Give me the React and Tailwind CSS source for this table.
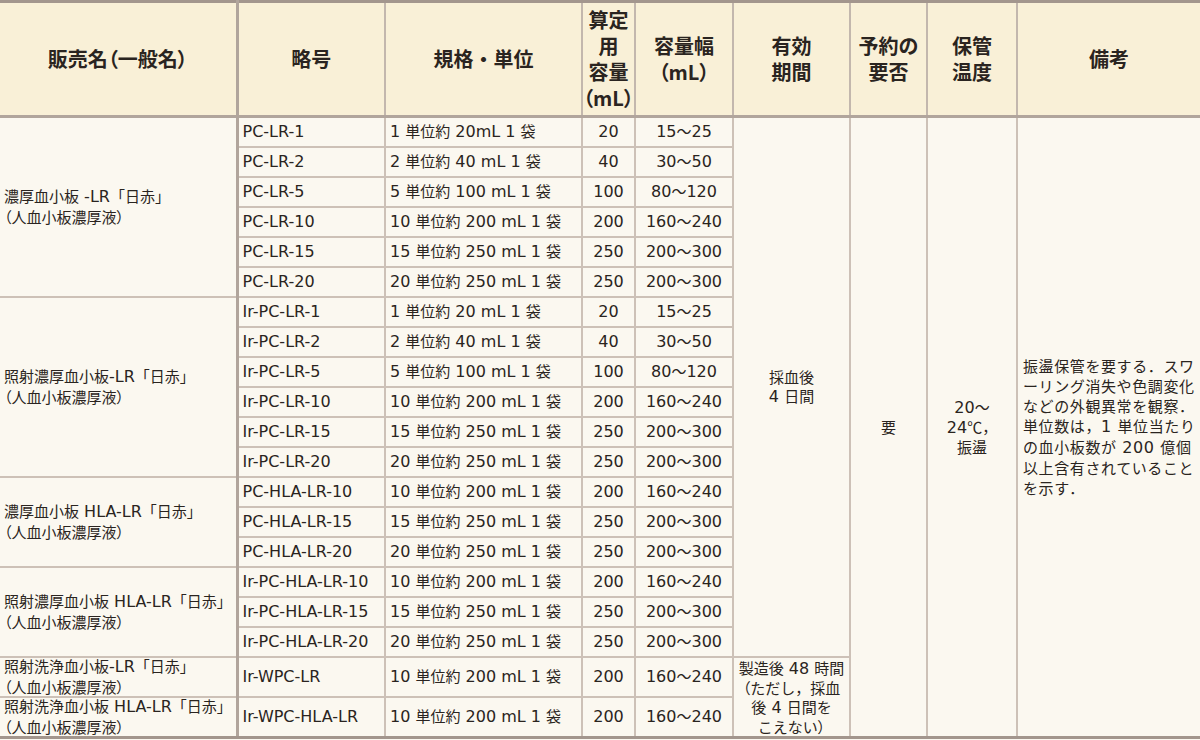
import React from "react";

// ASCII runs use DejaVu Sans at 16px, Japanese runs stay in Noto Sans CJK at 15px
const Mixed = ({ text }) =>
  text.split(/([\x20-\x7e]+)/).map((s, i) =>
    s === "" ? null : /^[\x20-\x7e]+$/.test(s) ? (
      <span key={i} className="font-['DejaVu_Sans',sans-serif] text-[16px]">
        {s}
      </span>
    ) : (
      <span key={i}>{s}</span>
    )
  );

const Lines = ({ lines }) =>
  lines.map((l, i) => (
    <React.Fragment key={i}>
      {i > 0 && <br />}
      <Mixed text={l} />
    </React.Fragment>
  ));

const groups = [
  {
    name: "濃厚血小板 -LR「日赤」",
    rows: [
      ["PC-LR-1", "1 単位約 20mL 1 袋", "20", "15～25"],
      ["PC-LR-2", "2 単位約 40 mL 1 袋", "40", "30～50"],
      ["PC-LR-5", "5 単位約 100 mL 1 袋", "100", "80～120"],
      ["PC-LR-10", "10 単位約 200 mL 1 袋", "200", "160～240"],
      ["PC-LR-15", "15 単位約 250 mL 1 袋", "250", "200～300"],
      ["PC-LR-20", "20 単位約 250 mL 1 袋", "250", "200～300"],
    ],
  },
  {
    name: "照射濃厚血小板-LR「日赤」",
    rows: [
      ["Ir-PC-LR-1", "1 単位約 20 mL 1 袋", "20", "15～25"],
      ["Ir-PC-LR-2", "2 単位約 40 mL 1 袋", "40", "30～50"],
      ["Ir-PC-LR-5", "5 単位約 100 mL 1 袋", "100", "80～120"],
      ["Ir-PC-LR-10", "10 単位約 200 mL 1 袋", "200", "160～240"],
      ["Ir-PC-LR-15", "15 単位約 250 mL 1 袋", "250", "200～300"],
      ["Ir-PC-LR-20", "20 単位約 250 mL 1 袋", "250", "200～300"],
    ],
  },
  {
    name: "濃厚血小板 HLA-LR「日赤」",
    rows: [
      ["PC-HLA-LR-10", "10 単位約 200 mL 1 袋", "200", "160～240"],
      ["PC-HLA-LR-15", "15 単位約 250 mL 1 袋", "250", "200～300"],
      ["PC-HLA-LR-20", "20 単位約 250 mL 1 袋", "250", "200～300"],
    ],
  },
  {
    name: "照射濃厚血小板 HLA-LR「日赤」",
    rows: [
      ["Ir-PC-HLA-LR-10", "10 単位約 200 mL 1 袋", "200", "160～240"],
      ["Ir-PC-HLA-LR-15", "15 単位約 250 mL 1 袋", "250", "200～300"],
      ["Ir-PC-HLA-LR-20", "20 単位約 250 mL 1 袋", "250", "200～300"],
    ],
  },
  {
    name: "照射洗浄血小板-LR「日赤」",
    tall: true,
    rows: [["Ir-WPC-LR", "10 単位約 200 mL 1 袋", "200", "160～240"]],
  },
  {
    name: "照射洗浄血小板 HLA-LR「日赤」",
    tall: true,
    last: true,
    rows: [["Ir-WPC-HLA-LR", "10 単位約 200 mL 1 袋", "200", "160～240"]],
  },
];

const th =
  "bg-[#f9f0d7] border-2 border-[#c3b7ad] border-t-[3px] border-t-[#a3968d] border-b-[3px] border-b-[#b1a59c] font-bold text-[20px] leading-[26px] text-center align-middle px-0";
const td = "bg-[#fbf8f0] border-2 border-[#cdc1b7] px-[3px] py-0 align-middle whitespace-nowrap";
const palt = "[font-feature-settings:'palt']";

export default function App() {
  let rowIndex = 0;
  return (
    <div className="w-[1200px] h-[740px] overflow-hidden bg-[#fbf8f0]">
      <table className="w-[1200px] table-fixed border-collapse text-[15px] text-[#2a2420] font-['Noto_Sans_CJK_JP',sans-serif]">
        <colgroup>
          <col className="w-[237px]" />
          <col className="w-[148px]" />
          <col className="w-[197px]" />
          <col className="w-[53px]" />
          <col className="w-[98px]" />
          <col className="w-[117px]" />
          <col className="w-[77px]" />
          <col className="w-[90px]" />
          <col className="w-[183px]" />
        </colgroup>
        <thead>
          <tr className="h-[115px]">
            <th className={th + " border-l-0 border-r-[3px] border-r-[#b1a59c]"}>
              <span className={palt}>販売名（一般名）</span>
            </th>
            <th className={th}>略号</th>
            <th className={th}>規格・単位</th>
            <th className={th}>
              <div className="flex flex-col items-center leading-[26px]">
                <span>算定</span>
                <span>用</span>
                <span>容量</span>
                <span className={palt}>（mL）</span>
              </div>
            </th>
            <th className={th}>
              容量幅
              <br />
              <span className={palt}>（mL）</span>
            </th>
            <th className={th}>
              有効
              <br />
              期間
            </th>
            <th className={th}>
              予約の
              <br />
              要否
            </th>
            <th className={th}>
              保管
              <br />
              温度
            </th>
            <th className={th + " border-r-0"}>備考</th>
          </tr>
        </thead>
        <tbody>
          {groups.map((g) =>
            g.rows.map((r, i) => {
              const first = rowIndex === 0;
              const idx = rowIndex++;
              const bottom = g.last ? " border-b-[3px] border-b-[#a3968d]" : "";
              return (
                <tr key={r[0]} className={g.tall ? "h-[40px]" : "h-[30px]"}>
                  {i === 0 && (
                    <td
                      rowSpan={g.rows.length}
                      className={
                        td +
                        " bg-[#faf2dc] border-l-0 border-r-[3px] border-r-[#b1a59c] px-[4px] leading-[20px]" +
                        bottom
                      }
                    >
                      <div className={g.tall ? "h-[36px] flex flex-col justify-center" : ""}>
                        <div>
                          <Mixed text={g.name} />
                          <br />
                          <span className={palt}>（人血小板濃厚液）</span>
                        </div>
                      </div>
                    </td>
                  )}
                  <td className={td + " px-[4px]" + bottom}>
                    <Mixed text={r[0]} />
                  </td>
                  <td className={td + " px-[4px]" + bottom}>
                    <Mixed text={r[1]} />
                  </td>
                  <td className={td + " text-center" + bottom}>
                    <Mixed text={r[2]} />
                  </td>
                  <td className={td + " text-center" + bottom}>
                    <Mixed text={r[3]} />
                  </td>
                  {idx === 0 && (
                    <td rowSpan={18} className={td + " text-center leading-[19px]"}>
                      <Lines lines={["採血後", "4 日間"]} />
                    </td>
                  )}
                  {idx === 18 && (
                    <td
                      rowSpan={2}
                      className={td + " text-center leading-[19px] border-b-[3px] border-b-[#a3968d]"}
                    >
                      <Lines lines={["製造後 48 時間"]} />
                      <br />
                      <span className={palt}>（</span>ただし，採血
                      <br />
                      <Lines lines={["後 4 日間を"]} />
                      <br />
                      こえない<span className={palt}>）</span>
                    </td>
                  )}
                  {first && (
                    <>
                      <td
                        rowSpan={20}
                        className={td + " text-center border-b-[3px] border-b-[#a3968d]"}
                      >
                        要
                      </td>
                      <td
                        rowSpan={20}
                        className={td + " text-center leading-[19px] border-b-[3px] border-b-[#a3968d]"}
                      >
                        <Lines lines={["20～", "24℃，", "振盪"]} />
                      </td>
                      <td
                        rowSpan={20}
                        className={
                          td + " px-[5px] leading-[20px] tracking-[0.04em] border-r-0 border-b-[3px] border-b-[#a3968d]"
                        }
                      >
                        <Lines
                          lines={[
                            "振盪保管を要する．スワ",
                            "ーリング消失や色調変化",
                            "などの外観異常を観察．",
                            "単位数は，1 単位当たり",
                            "の血小板数が 200 億個",
                            "以上含有されていること",
                            "を示す．",
                          ]}
                        />
                      </td>
                    </>
                  )}
                </tr>
              );
            })
          )}
        </tbody>
      </table>
    </div>
  );
}
